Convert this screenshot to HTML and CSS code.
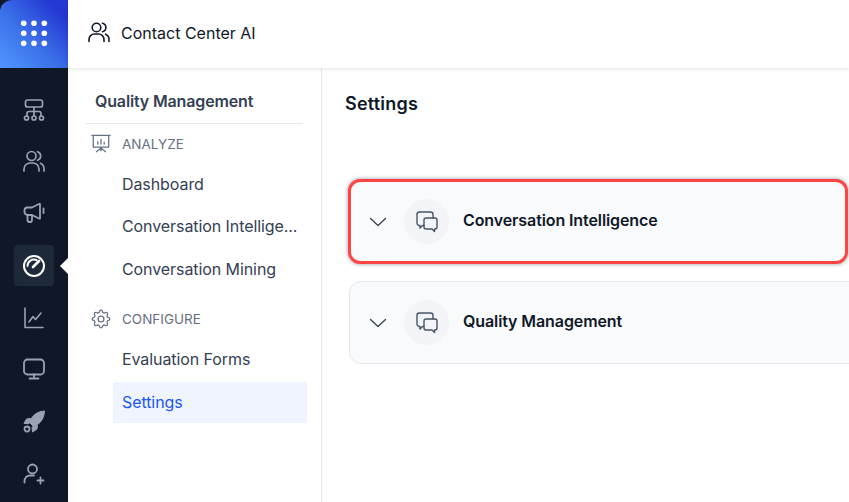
FILE: index.html
```html
<!DOCTYPE html>
<html lang="en">
<head>
<meta charset="utf-8">
<title>Contact Center AI</title>
<link rel="stylesheet" href="styles.css">
</head>
<body>
<div class="app">
  <aside class="rail">
    <div class="launcher">
      <svg class="dots" width="28" height="28" viewBox="0 0 28 28" fill="#fff">
        <circle cx="3.7" cy="3.3" r="2.8"/><circle cx="14" cy="3.3" r="2.8"/><circle cx="24.3" cy="3.3" r="2.8"/>
        <circle cx="3.7" cy="13.3" r="2.8"/><circle cx="14" cy="13.3" r="2.8"/><circle cx="24.3" cy="13.3" r="2.8"/>
        <circle cx="3.7" cy="23.3" r="2.8"/><circle cx="14" cy="23.3" r="2.8"/><circle cx="24.3" cy="23.3" r="2.8"/>
      </svg>
    </div>
    <nav class="rail-items">
      <div class="rail-item">
        <svg width="24" height="24" viewBox="0 0 24 24" fill="none" stroke="currentColor" stroke-width="1.7" stroke-linecap="round" stroke-linejoin="round">
          <rect x="3.5" y="2" width="17" height="7" rx="2"/><path d="M12 9v9M5 18v-2.500a2 2 0 0 1 2-2h10a2 2 0 0 1 2 2V18"/><circle cx="4.500" cy="20" r="2"/><circle cx="12" cy="20" r="2"/><circle cx="19.500" cy="20" r="2"/>
        </svg>
      </div>
      <div class="rail-item">
        <svg width="24" height="24" viewBox="0 0 24 24" fill="none" stroke="currentColor" stroke-width="1.7" stroke-linecap="round" stroke-linejoin="round">
          <circle cx="9.500" cy="6" r="4.500"/><path d="M2 21v-2a6 6 0 0 1 6-6h3a6 6 0 0 1 6 6v2"/><path d="M15.500 1.700a4.500 4.500 0 0 1 0 8.600M18.500 13.300a6 6 0 0 1 3.500 5.500V21"/>
        </svg>
      </div>
      <div class="rail-item">
        <svg width="24" height="24" viewBox="0 0 24 24" fill="none" stroke="currentColor" stroke-width="1.8" stroke-linecap="round" stroke-linejoin="round">
          <path d="M2.500 8.500a3 3 0 0 1 3-3H10l7-3.500h1v14.500h-1l-7-3.500H5.500a3 3 0 0 1-3-3z"/><path d="M5.500 13v5a2 2 0 0 0 2 2h.5a2 2 0 0 0 2-2v-4.500"/><path d="M21.500 6.500v4.500"/>
        </svg>
      </div>
      <div class="rail-item is-active">
        <svg width="24" height="24" viewBox="0 0 24 24" fill="none" stroke="currentColor" stroke-width="2" stroke-linecap="round" stroke-linejoin="round">
          <circle cx="12" cy="12" r="10"/><path d="M5.500 12a6.500 6.500 0 0 1 9-6"/><path d="M11 13l6-6" stroke-width="2.600"/>
        </svg>
        <span class="pointer"></span>
      </div>
      <div class="rail-item">
        <svg width="24" height="24" viewBox="0 0 24 24" fill="none" stroke="currentColor" stroke-width="1.600" stroke-linecap="round" stroke-linejoin="round">
          <path d="M3 2v19.500h18"/><path d="M7 16l4-5.500 2.500 3L19 7"/>
        </svg>
      </div>
      <div class="rail-item">
        <svg width="24" height="24" viewBox="0 0 24 24" fill="none" stroke="currentColor" stroke-width="1.800" stroke-linecap="round" stroke-linejoin="round">
          <rect x="2" y="1.500" width="20" height="15" rx="3.500"/><path d="M12 16.500v4M7.500 20.500h9"/>
        </svg>
      </div>
      <div class="rail-item">
        <svg width="24" height="24" viewBox="0 0 24 24" fill="currentColor" stroke="currentColor" stroke-width="1" stroke-linejoin="round">
          <path d="M22.500 1c-6.500.5-11 3.500-13.500 8l-1.500 3.500 4 4 3.500-1.700c4.500-2.800 7-7.300 7.500-13.800z"/><path d="M8.500 8.500l-4 .5-2.500 4.500 5 .2zM15.500 15.500l-.5 3.500-4.500 3-.5-5z"/>
          <circle cx="5" cy="19" r="2.500" fill="none" stroke-width="1.800"/>
        </svg>
      </div>
      <div class="rail-item">
        <svg width="24" height="24" viewBox="0 0 24 24" fill="none" stroke="currentColor" stroke-width="1.800" stroke-linecap="round" stroke-linejoin="round">
          <circle cx="10.500" cy="7" r="4.500"/><path d="M2.500 20.500v-1.500a5.500 5.500 0 0 1 5.500-5.500h4"/><path d="M18.500 15.500v6M15.500 18.500h6"/>
        </svg>
      </div>
    </nav>
  </aside>
  <div class="workspace">
    <header class="topbar">
      <svg class="ink-icon" width="24" height="24" viewBox="0 0 24 24" fill="none" stroke="currentColor" stroke-width="1.600" stroke-linecap="round" stroke-linejoin="round">
        <circle cx="9.500" cy="6.500" r="4.300"/><path d="M2 20.500v-2a5.500 5.500 0 0 1 5.500-5.500h4a5.500 5.500 0 0 1 5.500 5.500v2"/><path d="M15.500 2.300a4.300 4.300 0 0 1 0 8.400M18.500 13.300a5.500 5.500 0 0 1 3.500 5.200v2"/>
      </svg>
      <span class="product">Contact Center AI</span>
    </header>
    <div class="body">
      <aside class="menu">
        <h2 class="menu-title">Quality Management</h2>
        <div class="group-head group-head-first">
          <svg width="20" height="20" viewBox="0 0 22 22" fill="none" stroke="currentColor" stroke-width="1.400" stroke-linecap="round" stroke-linejoin="round">
            <path d="M1 1.500h20M2.500 1.500v13h17v-13"/><path d="M7.500 11V8.500M11 11V6M14.500 11V9"/><path d="M11 14.500v4M11 15.500l-5 4M11 15.500l5 4"/>
          </svg>
          <span>ANALYZE</span>
        </div>
        <a class="menu-link">Dashboard</a>
        <a class="menu-link">Conversation Intellige...</a>
        <a class="menu-link">Conversation Mining</a>
        <div class="group-head group-head-second">
          <svg width="20" height="20" viewBox="0 0 24 24" fill="none" stroke="currentColor" stroke-width="1.500" stroke-linecap="round" stroke-linejoin="round">
            <path d="M10.300 2.700a1.800 1.800 0 0 1 3.400 0l.3.900a1.800 1.800 0 0 0 2.500 1l.9-.4a1.800 1.800 0 0 1 2.400 2.400l-.4.900a1.800 1.800 0 0 0 1 2.500l.9.300a1.800 1.800 0 0 1 0 3.400l-.9.300a1.800 1.800 0 0 0-1 2.500l.4.900a1.800 1.800 0 0 1-2.400 2.400l-.9-.4a1.800 1.800 0 0 0-2.500 1l-.3.900a1.800 1.800 0 0 1-3.400 0l-.3-.9a1.800 1.800 0 0 0-2.500-1l-.9.400a1.800 1.800 0 0 1-2.400-2.400l.4-.9a1.800 1.800 0 0 0-1-2.500l-.9-.3a1.800 1.800 0 0 1 0-3.400l.9-.3a1.800 1.800 0 0 0 1-2.500l-.4-.9a1.800 1.800 0 0 1 2.400-2.400l.9.400a1.800 1.800 0 0 0 2.500-1z"/><circle cx="12" cy="12" r="3.500"/>
          </svg>
          <span>CONFIGURE</span>
        </div>
        <a class="menu-link">Evaluation Forms</a>
        <a class="menu-link is-current">Settings</a>
      </aside>
      <main class="content">
        <h1 class="page-title">Settings</h1>
        <section class="card card-marked">
          <svg class="chev" width="18" height="10" viewBox="0 0 18 10" fill="none" stroke="currentColor" stroke-width="1.300" stroke-linecap="round" stroke-linejoin="round"><path d="M1.500 1.500L9 8.500l7.500-7"/></svg>
          <span class="badge">
            <svg width="24" height="24" viewBox="0 0 24 24" fill="none" stroke="currentColor" stroke-width="1.400" stroke-linecap="round" stroke-linejoin="round">
              <path d="M9 15.500H7.500L5 18v-2.500H4.500a2.500 2.500 0 0 1-2.500-2.500V4.500A2.500 2.500 0 0 1 4.500 2h11A2.500 2.500 0 0 1 18 4.500V8"/><path d="M11 8h9a2 2 0 0 1 2 2v7a2 2 0 0 1-2 2h-.5v2.500L17 19h-6a2 2 0 0 1-2-2v-7a2 2 0 0 1 2-2z"/>
            </svg>
          </span>
          <span class="card-title">Conversation Intelligence</span>
        </section>
        <section class="card">
          <svg class="chev" width="18" height="10" viewBox="0 0 18 10" fill="none" stroke="currentColor" stroke-width="1.300" stroke-linecap="round" stroke-linejoin="round"><path d="M1.500 1.500L9 8.500l7.500-7"/></svg>
          <span class="badge">
            <svg width="24" height="24" viewBox="0 0 24 24" fill="none" stroke="currentColor" stroke-width="1.400" stroke-linecap="round" stroke-linejoin="round">
              <path d="M9 15.500H7.500L5 18v-2.500H4.500a2.500 2.500 0 0 1-2.500-2.500V4.500A2.500 2.500 0 0 1 4.500 2h11A2.500 2.500 0 0 1 18 4.500V8"/><path d="M11 8h9a2 2 0 0 1 2 2v7a2 2 0 0 1-2 2h-.5v2.500L17 19h-6a2 2 0 0 1-2-2v-7a2 2 0 0 1 2-2z"/>
            </svg>
          </span>
          <span class="card-title">Quality Management</span>
        </section>
      </main>
    </div>
  </div>
</div>
</body>
</html>
```
FILE: styles.css
```css
* { box-sizing: border-box; }
html, body { margin: 0; height: 100%; overflow: hidden; background: #fff; }
body { font-family: Inter, "Liberation Sans", sans-serif; color: #101828; }
.app { display: flex; width: 849px; height: 502px; }

.rail { width: 68px; flex: none; background: #101828; display: flex; flex-direction: column; align-items: center; }
.launcher { width: 68px; height: 68px; display: flex; align-items: center; justify-content: center; background: linear-gradient(45deg, #4f96ff 0%, #3a6fe8 45%, #2438d4 85%); border-top-left-radius: 12px; }
.rail-items { display: flex; flex-direction: column; align-items: center; gap: 11px; padding-top: 21px; }
.rail-item { position: relative; width: 40px; height: 41px; display: flex; align-items: center; justify-content: center; color: #98a2b3; border-radius: 4px; }
.rail-item.is-active { color: #fff; background: #1d2939; }
.pointer { position: absolute; left: 46px; top: 12px; width: 0; height: 0; border-style: solid; border-width: 9px 9px 9px 0; border-color: transparent #fff transparent transparent; }

.workspace { flex: 1; min-width: 0; display: flex; flex-direction: column; }
.topbar { height: 68px; flex: none; display: flex; align-items: center; gap: 10px; padding-left: 19px; padding-bottom: 2px; background: #fff; box-shadow: 0 1px 4px rgba(16, 24, 40, .12); position: relative; }
.ink-icon { color: #101828; }
.product { font-size: 16px; font-weight: 400; color: #101828; }

.body { flex: 1; display: flex; min-height: 0; }
.menu { width: 254px; flex: none; border-right: 1px solid #e4e7ec; display: flex; flex-direction: column; padding: 0 14px 0 18px; }
.menu-title { margin: 0 4px 0 0; height: 56px; padding: 23px 0 0 9px; font-size: 16px; line-height: 20px; font-weight: 600; color: #344054; border-bottom: 1px solid #e4e7ec; letter-spacing: -.15px; }
.group-head { display: flex; align-items: center; gap: 11px; height: 22px; font-size: 13.500px; color: #667085; padding-left: 5px; }
.group-head-first { margin-top: 9px; margin-bottom: 8px; }
.group-head-second { margin-top: 17.500px; margin-bottom: 8px; }
.menu-link { display: flex; align-items: center; height: 42.500px; margin-left: 27px; padding-left: 9px; padding-bottom: 1px; font-size: 16px; letter-spacing: -.08px; color: #344054; white-space: nowrap; overflow: hidden; }
.menu-link.is-current { color: #1a56f0; background: #eff4ff; height: 41px; margin-top: 1.500px; }

.content { flex: 1; min-width: 0; padding: 0 0 0 23px; }
.page-title { margin: 0; padding-top: 26px; height: 111px; font-size: 18px; line-height: 20px; font-weight: 600; color: #101828; letter-spacing: .2px; }
.card { display: flex; align-items: center; width: 520px; height: 83px; margin-left: 4px; margin-bottom: 17px; padding-left: 19px; background: #f9fafb; border: 1px solid #e4e7ec; border-radius: 12px; }
.card-marked { width: 500px; height: 85px; margin-left: 3px; padding-left: 18px; border: 3px solid #f44; border-radius: 12px; box-shadow: 0 0 4px rgba(16, 24, 40, .45); }
.chev { color: #344054; flex: none; }
.badge { width: 45px; height: 45px; flex: none; margin-left: 17px; border-radius: 50%; background: #f2f4f7; color: #475467; display: flex; align-items: center; justify-content: center; }
.card-title { margin-left: 14px; padding-bottom: 4px; font-size: 16px; font-weight: 600; color: #101828; letter-spacing: -.1px; }
```
